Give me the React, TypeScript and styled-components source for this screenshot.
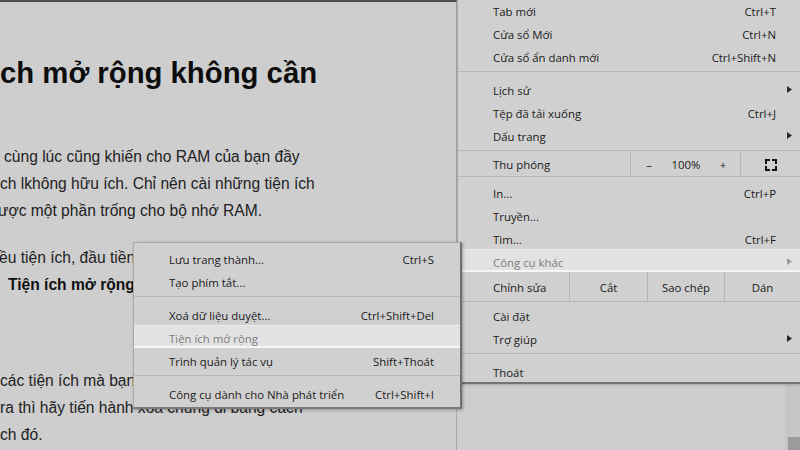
import React from "react";
import styled, { createGlobalStyle, css } from "styled-components";

const GlobalStyle = createGlobalStyle`
  html, body { margin: 0; padding: 0; background: #cecece; overflow: hidden; }
`;

const Screen = styled.div`
  position: relative;
  width: 800px;
  height: 450px;
  overflow: hidden;
  display: flex;
  background: #cecece;
`;

const Article = styled.div`
  width: 457px;
  flex: none;
  box-sizing: border-box;
  border-top: 2px solid #4d4d4d;
  border-right: 1px solid #aaaaaa;
  overflow: hidden;
  font-family: "Liberation Sans", Arial, sans-serif;
  color: #222;
`;

const Heading = styled.h1`
  margin: 53px 0 0 0;
  font-size: 29.3px;
  line-height: 36px;
  font-weight: 700;
  color: #0d0d0d;
  white-space: nowrap;
`;

const Para = styled.div<{ $gap: number }>`
  margin-top: ${(p) => p.$gap}px;
  font-size: 15.6px;
  line-height: 27px;
`;

const Line = styled.div<{ $shift?: number; $bold?: boolean }>`
  white-space: nowrap;
  margin-left: ${(p) => p.$shift ?? 0}px;
  font-weight: ${(p) => (p.$bold ? 700 : 400)};
  color: ${(p) => (p.$bold ? "#111" : "#222")};
`;

const Gutter = styled.div`
  flex: 1;
`;

const ScrollTrack = styled.div`
  width: 15px;
  flex: none;
  display: flex;
  flex-direction: column;
  justify-content: flex-end;
  background: #c6c6c6;
`;

const ScrollThumb = styled.div`
  height: 13px;
  margin-left: 3px;
  background: #9b9b9b;
`;

const menuBase = css`
  position: absolute;
  box-sizing: border-box;
  background: #d0d0d0;
  font-family: "Segoe UI", "Open Sans", "Noto Sans", sans-serif;
  font-size: 11.4px;
  color: #1a1a1a;
`;

const MainMenu = styled.div`
  ${menuBase};
  left: 457px;
  top: -2px;
  right: 0;
  border-left: 1px solid #a9a9a9;
  border-bottom: 2px solid #747474;
  padding-bottom: 0;
  box-shadow: 0 1px 2px rgba(0, 0, 0, 0.2);
  z-index: 1;
`;

const SubMenu = styled.div`
  ${menuBase};
  left: 133px;
  top: 242px;
  width: 329px;
  border: 1px solid #ababab;
  border-right: 2px solid #6f6f6f;
  border-bottom: 2px solid #7a7a7a;
  padding: 3px 0 3px;
  box-shadow: 1px 1px 3px rgba(0, 0, 0, 0.3);
  z-index: 2;
`;

const Row = styled.div<{ $active?: boolean; $right: number }>`
  position: relative;
  height: 23px;
  box-sizing: border-box;
  padding: 3px ${(p) => p.$right}px 0 35px;
  display: flex;
  align-items: center;
  justify-content: space-between;
  white-space: nowrap;
  ${(p) =>
    p.$active &&
    css`
      background: #e2e2e2;
      color: #7c7c7c;
      box-shadow: inset 0 1px 0 #eeeeee, inset 0 -2px 0 #f6f6f6;
    `}
`;

const Shortcut = styled.span`
  color: #1a1a1a;
`;

const Arrow = styled.svg<{ $dim?: boolean }>`
  position: absolute;
  right: 8px;
  top: 9px;
  fill: ${(p) => (p.$dim ? "#9a9a9a" : "#2a2a2a")};
`;

const Separator = styled.div`
  height: 1px;
  margin: 4px 0 5px;
  background: #b6b6b6;
`;

const SplitRow = styled.div<{ $cols: string; $height: number; $top?: boolean }>`
  display: grid;
  grid-template-columns: ${(p) => p.$cols};
  height: ${(p) => p.$height}px;
  box-sizing: border-box;
  border-top: ${(p) => (p.$top ? "1px solid #b6b6b6" : "none")};
  border-bottom: 1px solid #b6b6b6;
  margin: ${(p) => (p.$top ? "4px 0 3px" : "0 0 1px")};
`;

const LabelCell = styled.div`
  display: flex;
  align-items: center;
  padding: 2px 0 0 35px;
`;

const Cell = styled.div<{ $line?: boolean }>`
  display: flex;
  align-items: center;
  justify-content: center;
  padding-top: 2px;
  border-left: ${(p) => (p.$line ? "1px solid #b6b6b6" : "none")};
`;

const ZoomCtrls = styled.div`
  display: grid;
  grid-template-columns: 36px 38px 36px;
  border-left: 1px solid #b6b6b6;
  & > span {
    display: flex;
    align-items: center;
    justify-content: center;
    padding-top: 2px;
  }
`;

const TriangleRight = ({ dim }: { dim?: boolean }) => (
  <Arrow $dim={dim} width="5" height="7" viewBox="0 0 5 7">
    <polygon points="0,0 5,3.5 0,7" />
  </Arrow>
);

const FullscreenIcon = () => (
  <svg width="12" height="12" viewBox="0 0 12 12" fill="none" stroke="#111" strokeWidth="2" strokeLinecap="square">
    <path d="M1 4V1h3M8 1h3v3M11 8v3H8M4 11H1V8" />
  </svg>
);

type Item = { label: string; shortcut?: string; arrow?: boolean; active?: boolean };

const group1: Item[] = [
  { label: "Tab mới", shortcut: "Ctrl+T" },
  { label: "Cửa sổ Mới", shortcut: "Ctrl+N" },
  { label: "Cửa sổ ẩn danh mới", shortcut: "Ctrl+Shift+N" },
];
const group2: Item[] = [
  { label: "Lịch sử", arrow: true },
  { label: "Tệp đã tải xuống", shortcut: "Ctrl+J" },
  { label: "Dấu trang", arrow: true },
];
const group3: Item[] = [
  { label: "In...", shortcut: "Ctrl+P" },
  { label: "Truyền..." },
  { label: "Tìm...", shortcut: "Ctrl+F" },
  { label: "Công cụ khác", arrow: true, active: true },
];
const group4: Item[] = [
  { label: "Cài đặt" },
  { label: "Trợ giúp", arrow: true },
];
const sub1: Item[] = [
  { label: "Lưu trang thành...", shortcut: "Ctrl+S" },
  { label: "Tạo phím tắt..." },
];
const sub2: Item[] = [
  { label: "Xoá dữ liệu duyệt...", shortcut: "Ctrl+Shift+Del" },
  { label: "Tiện ích mở rộng", active: true },
  { label: "Trình quản lý tác vụ", shortcut: "Shift+Thoát" },
];

const renderItems = (items: Item[], right: number) =>
  items.map((it) => (
    <Row key={it.label} $active={it.active} $right={right}>
      <span>{it.label}</span>
      {it.shortcut && <Shortcut>{it.shortcut}</Shortcut>}
      {it.arrow && <TriangleRight dim={it.active} />}
    </Row>
  ));

export default function App() {
  return (
    <>
      <GlobalStyle />
      <Screen>
        <Article>
          <Heading>ch mở rộng không cần</Heading>
          <Para $gap={52}>
            <Line $shift={4}>cùng lúc cũng khiến cho RAM của bạn đầy</Line>
            <Line>ch lkhông hữu ích. Chỉ nên cài những tiện ích</Line>
            <Line $shift={-2}>ược một phần trống cho bộ nhớ RAM.</Line>
          </Para>
          <Para $gap={20}>
            <Line $shift={-1}>ều tiện ích, đầu tiền</Line>
            <Line $shift={8} $bold>
              Tiện ích mở rộng
            </Line>
          </Para>
          <Para $gap={69}>
            <Line>các tiện ích mà bạn</Line>
            <Line>ra thì hãy tiến hành xoá chúng đi bằng cách</Line>
            <Line>ch đó.</Line>
          </Para>
        </Article>
        <Gutter />
        <ScrollTrack>
          <ScrollThumb />
        </ScrollTrack>

        <MainMenu>
          {renderItems(group1, 24)}
          <Separator />
          {renderItems(group2, 24)}
          <SplitRow $cols="172px 110px 1fr" $height={27} $top>
            <LabelCell>Thu phóng</LabelCell>
            <ZoomCtrls>
              <span>–</span>
              <span>100%</span>
              <span>+</span>
            </ZoomCtrls>
            <Cell $line>
              <FullscreenIcon />
            </Cell>
          </SplitRow>
          {renderItems(group3, 24)}
          <SplitRow $cols="111px 78px 77px 1fr" $height={30}>
            <LabelCell>Chỉnh sửa</LabelCell>
            <Cell $line>Cắt</Cell>
            <Cell $line>Sao chép</Cell>
            <Cell $line>Dán</Cell>
          </SplitRow>
          {renderItems(group4, 24)}
          <Separator />
          {renderItems([{ label: "Thoát" }], 24)}
        </MainMenu>

        <SubMenu>
          {renderItems(sub1, 26)}
          <Separator />
          {renderItems(sub2, 26)}
          <Separator />
          {renderItems([{ label: "Công cụ dành cho Nhà phát triển", shortcut: "Ctrl+Shift+I" }], 26)}
        </SubMenu>
      </Screen>
    </>
  );
}
